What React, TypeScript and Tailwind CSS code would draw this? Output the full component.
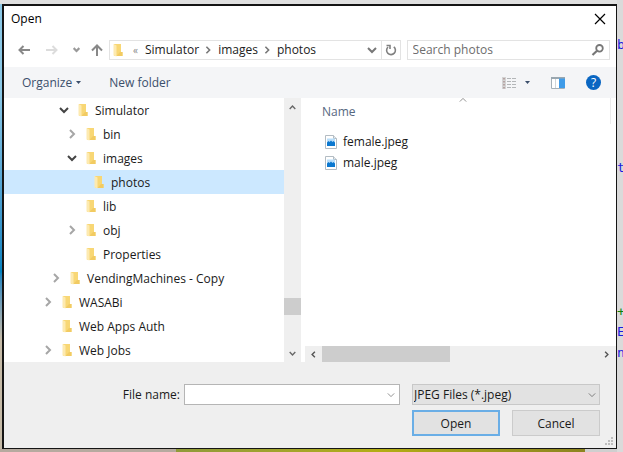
import type { ReactNode } from "react";

type ChevronProps = { dir: "up" | "down" | "left" | "right"; className?: string; stroke?: number; size?: number };

const chevronPaths = {
  up: "M1 7 L5 3 L9 7",
  down: "M1 3 L5 7 L9 3",
  left: "M7 1 L3 5 L7 9",
  right: "M3 1 L7 5 L3 9",
};

function Chevron({ dir, className = "", stroke = 2, size = 10 }: ChevronProps) {
  return (
    <svg width={size} height={size} viewBox="0 0 10 10" fill="none" stroke="currentColor" strokeWidth={stroke} className={`shrink-0 ${className}`} aria-hidden="true">
      <path d={chevronPaths[dir]} />
    </svg>
  );
}

function Folder() {
  return (
    <svg width="10" height="14" viewBox="0 0 10 14" className="shrink-0" aria-hidden="true">
      <path d="M1 1h7v8h1.500v4H1z" fill="#f8d775" />
      <path d="M7 9h2.500v4H3.500z" fill="#f2cb62" />
      <path d="M0.500 1l3 1.500V13.500L0.500 12.500z" fill="#fdeab0" />
    </svg>
  );
}

function ImageFile() {
  return (
    <svg width="12" height="14" viewBox="0 0 12 14" className="shrink-0" aria-hidden="true">
      <path d="M0.500 0.500h8l3 3v10h-11z" fill="#fff" stroke="#b3bcc3" />
      <path d="M8.500 0.500v3h3" fill="#e3e7ea" stroke="#b3bcc3" />
      <path d="M2 3.500h8V11H2z" fill="#b9defa" />
      <path d="M2 7.500l1.500-1.500 1 1L6 5.500 7.500 7 8.500 6 10 7.500V11H2z" fill="#0b78d0" />
    </svg>
  );
}

type Node = { name: string; indent: string; state: "open" | "closed" | "leaf"; selected?: boolean };

const nodes: Node[] = [
  { name: "Simulator", indent: "pl-[55px]", state: "open" },
  { name: "bin", indent: "pl-[63px]", state: "closed" },
  { name: "images", indent: "pl-[63px]", state: "open" },
  { name: "photos", indent: "pl-[71px]", state: "leaf", selected: true },
  { name: "lib", indent: "pl-[63px]", state: "leaf" },
  { name: "obj", indent: "pl-[63px]", state: "closed" },
  { name: "Properties", indent: "pl-[63px]", state: "leaf" },
  { name: "VendingMachines - Copy", indent: "pl-[47px]", state: "closed" },
  { name: "WASABi", indent: "pl-[39px]", state: "closed" },
  { name: "Web Apps Auth", indent: "pl-[39px]", state: "leaf" },
  { name: "Web Jobs", indent: "pl-[39px]", state: "closed" },
];

function IconButton({ label, className = "", children }: { label: string; className?: string; children: ReactNode }) {
  return (
    <button type="button" aria-label={label} className={`flex shrink-0 items-center justify-center ${className}`}>
      {children}
    </button>
  );
}

function TitleBar() {
  return (
    <header className="flex h-[26px] items-center justify-between pr-2 pl-[7px]">
      <h1 className="text-black">Open</h1>
      <IconButton label="Close" className="h-4 w-4 text-black">
        <svg width="12" height="12" viewBox="0 0 12 12" stroke="currentColor" strokeWidth="1.200" aria-hidden="true">
          <path d="M1 1l10 10M11 1L1 11" />
        </svg>
      </IconButton>
    </header>
  );
}

function AddressRow() {
  return (
    <div className="flex h-[35px] items-center pr-[6px] pl-[13px]">
      <IconButton label="Back" className="w-[14px] text-[#888]">
        <svg width="12" height="10" viewBox="0 0 12 10" fill="none" stroke="currentColor" strokeWidth="2" aria-hidden="true">
          <path d="M12 5H1.500M5.500 1l-4 4 4 4" />
        </svg>
      </IconButton>
      <IconButton label="Forward" className="ml-[14px] w-[14px] text-[#dcdcdc]">
        <svg width="12" height="10" viewBox="0 0 12 10" fill="none" stroke="currentColor" strokeWidth="2" aria-hidden="true">
          <path d="M0 5h10.500M6.500 1l4 4-4 4" />
        </svg>
      </IconButton>
      <IconButton label="Recent locations" className="ml-3 w-[10px] text-[#999]">
        <Chevron dir="down" size={7} stroke={3} />
      </IconButton>
      <IconButton label="Up" className="ml-[9px] w-[14px] text-[#888]">
        <svg width="12" height="12" viewBox="0 0 12 12" fill="none" stroke="currentColor" strokeWidth="2" aria-hidden="true">
          <path d="M6 12V1.500M1 6.500l5-5 5 5" />
        </svg>
      </IconButton>
      <nav aria-label="Address" className="ml-[5px] flex h-5 min-w-0 flex-[286] items-center border border-[#e3e3e3] pl-[3px] text-[#222]">
        <Folder />
        <span className="ml-[10px] text-[10px] text-[#888]">«</span>
        <a href="#simulator" className="ml-[7px]">Simulator</a>
        <Chevron dir="right" size={8} className="mr-[6px] ml-[5px] text-[#777]" />
        <a href="#images">images</a>
        <Chevron dir="right" size={8} className="mr-[6px] ml-[5px] text-[#777]" />
        <a href="#photos">photos</a>
        <IconButton label="Previous locations" className="mr-1 ml-auto w-[10px] text-[#777]">
          <Chevron dir="down" />
        </IconButton>
        <IconButton label="Refresh" className="h-full w-[19px] border-l border-[#e3e3e3] text-[#808080]">
          <svg width="12" height="12" viewBox="0 0 12 12" fill="none" stroke="currentColor" strokeWidth="1.600" aria-hidden="true">
            <path d="M8.800 2.800A4.400 4.400 0 1 1 3 3" />
            <path d="M1.500 1.500h3.500v3.500" />
          </svg>
        </IconButton>
      </nav>
      <div className="ml-[6px] flex h-5 min-w-0 flex-[191] items-center border border-[#e3e3e3] pr-[5px] pl-[5px]">
        <input type="search" aria-label="Search photos" placeholder="Search photos" className="w-full min-w-0 bg-transparent outline-none placeholder:text-[#6d6d6d]" />
        <svg width="13" height="12" viewBox="0 0 13 12" fill="none" stroke="#777" aria-hidden="true" className="shrink-0">
          <circle cx="8.500" cy="4.300" r="3.300" strokeWidth="1.800" />
          <path d="M6 6.800L1.500 11" strokeWidth="2.200" />
        </svg>
      </div>
    </div>
  );
}

function Toolbar() {
  return (
    <div className="flex h-[31px] items-center bg-[#f4f5f7] pr-[15px] pl-[18px] text-[#3b4f6b]">
      <button type="button" className="flex items-center gap-1">
        Organize
        <svg width="5" height="3" viewBox="0 0 5 3" fill="currentColor" aria-hidden="true"><path d="M0 0h5L2.500 3z" /></svg>
      </button>
      <button type="button" className="ml-7">New folder</button>
      <IconButton label="Change view" className="ml-auto w-[14px]">
        <svg width="14" height="12" viewBox="0 0 14 12" aria-hidden="true">
          <path d="M0 0h4v12H0z" fill="#d3d3d3" />
          <path d="M1 1h2v1.500H1zM1 4h2v1.500H1zM1 7h2v1.500H1zM1 10h2v1.500H1z" fill="#b5a3a3" />
          <path d="M5 1.500h4M10 1.500h4M5 4.500h4M10 4.500h4M5 7.500h4M10 7.500h4M5 10.500h4M10 10.500h4" stroke="#b3b6b8" />
        </svg>
      </IconButton>
      <IconButton label="More views" className="ml-[9px] w-[5px]">
        <svg width="5" height="3" viewBox="0 0 5 3" fill="currentColor" aria-hidden="true"><path d="M0 0h5L2.500 3z" /></svg>
      </IconButton>
      <IconButton label="Preview pane" className="ml-[21px] w-[14px]">
        <svg width="14" height="12" viewBox="0 0 14 12" aria-hidden="true">
          <path d="M0.500 0.500h13v11H0.500z" fill="#fff" stroke="#a5b0b8" />
          <path d="M0 0h14v2H0z" fill="#9aa7b0" />
          <path d="M4.500 2v9" stroke="#d0d6da" />
          <path d="M8 1.500h6V11H8z" fill="#3f9be8" />
        </svg>
      </IconButton>
      <IconButton label="Help" className="ml-[21px] h-[15px] w-[15px] rounded-full bg-[#0a66c2] text-[12px] font-medium text-white">?</IconButton>
    </div>
  );
}

function FolderTree() {
  return (
    <div className="flex min-w-0 flex-[297]">
      <ul role="tree" aria-label="Folders" className="min-w-0 flex-1">
        {nodes.map((n) => (
          <li key={n.name} role="treeitem" aria-selected={!!n.selected} className={`flex h-6 items-center ${n.indent} ${n.selected ? "bg-[#cce8ff]" : ""}`}>
            <span className="flex w-[10px] shrink-0 justify-center">
              {n.state === "open" && <Chevron dir="down" stroke={2} className="text-[#444]" />}
              {n.state === "closed" && <Chevron dir="right" stroke={2} className="text-[#a6a6a6]" />}
            </span>
            <span className="ml-[9px] flex"><Folder /></span>
            <span className="ml-[7px] pt-px whitespace-nowrap">{n.name}</span>
          </li>
        ))}
      </ul>
      <div className="flex w-[17px] shrink-0 flex-col items-center bg-[#efefef] text-[#666]">
        <Chevron dir="up" size={7} stroke={2} className="mt-[6px]" />
        <div className="flex-[184]" />
        <div className="h-[17px] w-full bg-[#cdcdcd]" />
        <div className="flex-[35]" />
        <Chevron dir="down" size={7} stroke={2} className="mb-[5px]" />
      </div>
    </div>
  );
}

function FileList() {
  return (
    <div className="ml-1 flex min-w-0 flex-[311] flex-col">
      <table className="w-full text-left">
        <thead>
          <tr className="h-[26px]">
            <th scope="col" className="relative p-0 pr-[5px] pl-[17px] font-normal text-[#56687f]">
              <span className="flex h-[26px] items-center border-r border-[#ececec] pt-px">Name</span>
              <Chevron dir="up" size={8} stroke={1} className="absolute top-[-2px] left-1/2 -ml-[2px] text-[#777]" />
            </th>
          </tr>
        </thead>
        <tbody>
          <tr aria-hidden="true" className="h-[7px]"><td className="p-0" /></tr>
          {["female.jpeg", "male.jpeg"].map((f) => (
            <tr key={f} className="h-[21px]">
              <td className="p-0 pl-5">
                <span className="flex items-center gap-[6px]"><ImageFile />{f}</span>
              </td>
            </tr>
          ))}
        </tbody>
      </table>
      <div className="mt-auto flex h-4 items-center bg-[#efefef] text-[#555]">
        <Chevron dir="left" size={7} stroke={2} className="mx-[5px]" />
        <div className="h-full flex-[128] bg-[#cdcdcd]" />
        <div className="flex-[153]" />
        <Chevron dir="right" size={7} stroke={2} className="mr-[6px]" />
      </div>
    </div>
  );
}

function Footer() {
  return (
    <footer className="relative flex flex-col gap-[5px] bg-[#efefef] pt-[22px] pr-4 pb-3">
      <div className="flex h-[21px] items-center">
        <label htmlFor="file-name" className="flex-[176] pt-px pr-1 text-right">File name:</label>
        <div className="flex h-full flex-[210] items-center border border-[#b5b5b5] bg-white pr-1">
          <input id="file-name" type="text" className="h-full w-full min-w-0 bg-transparent px-1 outline-none" />
          <IconButton label="File name history" className="text-[#777]"><Chevron dir="down" size={8} stroke={1} /></IconButton>
        </div>
        <div className="relative ml-3 h-full w-[188px]">
          <select aria-label="File type" className="h-full w-full appearance-none border border-[#c8c8c8] bg-[#e2e2e2] pl-px leading-4">
            <option>JPEG Files (*.jpeg)</option>
          </select>
          <Chevron dir="down" size={8} stroke={1} className="pointer-events-none absolute top-[7px] right-1 text-[#666]" />
        </div>
      </div>
      <div className="flex justify-end gap-3">
        <button type="button" className="h-[26px] w-[88px] border-2 border-[#6aaee6] bg-[#e2e2e2] pt-px">Open</button>
        <button type="button" className="h-[26px] w-[88px] border border-[#cbcbcb] bg-[#e2e2e2] pt-px">Cancel</button>
      </div>
      <svg width="9" height="9" viewBox="0 0 9 9" fill="#bdbdbd" className="absolute right-[2px] bottom-[2px]" aria-hidden="true">
        <path d="M6 0h2v2H6zM3 3h2v2H3zM6 3h2v2H6zM0 6h2v2H0zM3 6h2v2H3zM6 6h2v2H6z" />
      </svg>
    </footer>
  );
}

export default function App() {
  return (
    <div className="relative flex min-h-screen flex-col overflow-hidden bg-[#dcdcdc] font-['Open_Sans','Noto_Sans',sans-serif] text-[12px] leading-4 text-[#1a1a1a]">
      <div className="absolute inset-y-0 left-0 w-[2px] bg-linear-to-b from-[#8cc8e6] from-20% via-[#0083c0] via-60% to-[#c6bba8] to-75%" />
      <div className="absolute inset-x-0 bottom-0 flex h-1">
        <div className="flex-[176] bg-[#b5aa9f]" />
        <div className="flex-[409] bg-linear-to-r from-[#8f9a3a] via-[#b3ad14] to-[#8c8420]" />
        <div className="flex-[38] bg-[#cfcfcf]" />
      </div>
      <div className="absolute inset-x-0 top-0 h-1 bg-[#e0e0e0]" />
      <div aria-hidden="true" className="absolute inset-y-0 right-0 w-[6px] bg-[#dadada] font-['DejaVu_Sans_Mono',monospace] text-[13px] text-[#1c1ce0]">
        <span className="absolute top-[37px] left-0">b</span>
        <span className="absolute top-[160px] left-0">t</span>
        <span className="absolute top-[304px] left-0 text-[#0b800b]">+</span>
        <span className="absolute top-[324px] left-0">E</span>
        <span className="absolute top-[345px] left-0">n</span>
      </div>
      <main className="relative mt-1 mr-[6px] mb-1 ml-[2px] flex flex-1 flex-col border-t-2 border-r border-b border-l-2 border-[#151515] bg-white">
        <TitleBar />
        <AddressRow />
        <Toolbar />
        <div className="flex flex-1">
          <FolderTree />
          <FileList />
        </div>
        <Footer />
      </main>
    </div>
  );
}
